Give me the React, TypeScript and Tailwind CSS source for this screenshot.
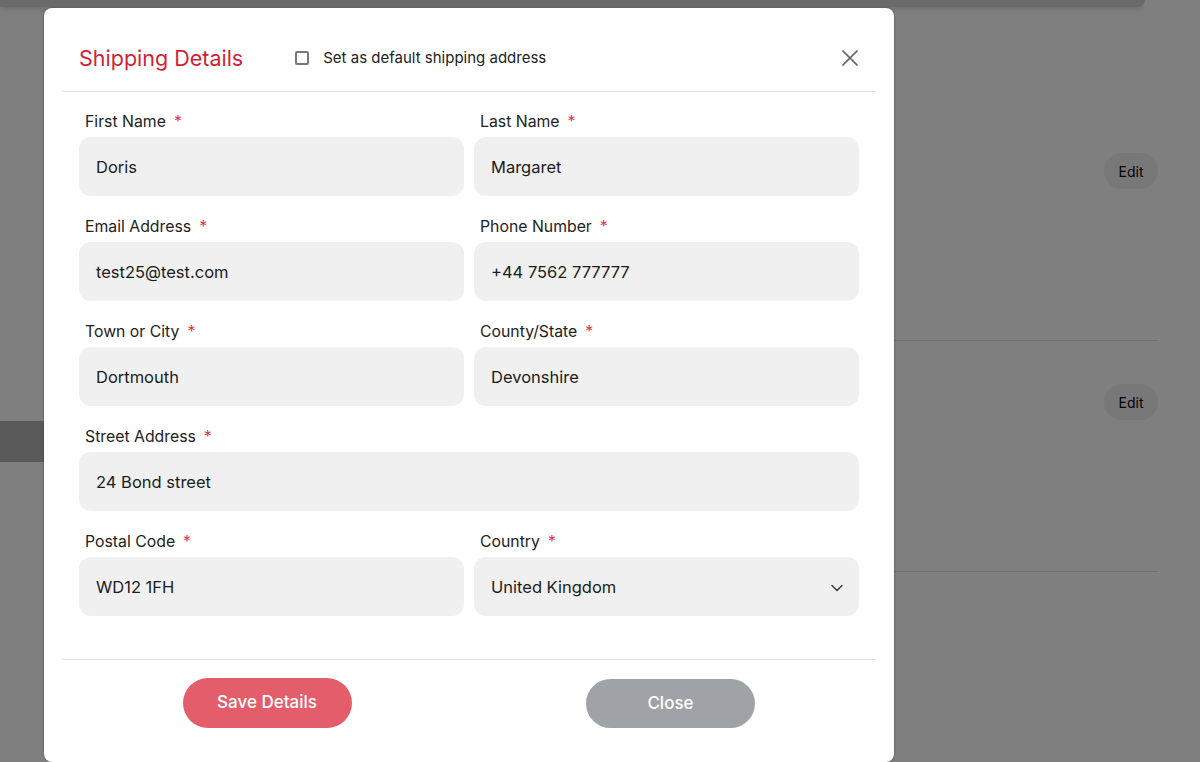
import React from "react";

interface Field {
  label: string;
  value: string;
  full?: boolean;
  select?: boolean;
}

const fields: Field[] = [
  { label: "First Name", value: "Doris" },
  { label: "Last Name", value: "Margaret" },
  { label: "Email Address", value: "test25@test.com" },
  { label: "Phone Number", value: "+44 7562 777777" },
  { label: "Town or City", value: "Dortmouth" },
  { label: "County/State", value: "Devonshire" },
  { label: "Street Address", value: "24 Bond street", full: true },
  { label: "Postal Code", value: "WD12 1FH" },
  { label: "Country", value: "United Kingdom", select: true },
];

function FormField({ field }: { field: Field }) {
  return (
    <div className={field.full ? "col-span-2" : ""}>
      <div className="pl-[6px] h-5 text-[15.8px] leading-5 text-[#222]">
        {field.label}
        <span className="ml-[8px] text-[#e8334a]">*</span>
      </div>
      <div className="mt-[5px] h-[59px] rounded-[12px] bg-[#f0f0f0] pl-[17px] pr-[16px] pt-[2px] flex items-center justify-between text-[16.5px] text-[#1c1c1c]">
        <span>{field.value}</span>
        {field.select && (
          <svg width="12" height="8" viewBox="0 0 12 8" fill="none">
            <path d="M1 1.5l5 5 5-5" stroke="#333" strokeWidth="1.4" strokeLinecap="round" strokeLinejoin="round" />
          </svg>
        )}
      </div>
    </div>
  );
}

export default function App() {
  return (
    <div className="relative w-[1200px] h-[762px] overflow-hidden bg-white font-['Inter',sans-serif]">
      {/* page behind the modal */}
      <div className="w-[1145px] h-[7px] bg-[#d4d4d4] rounded-br-lg shadow-md" />
      <div className="flex">
        <div className="w-[300px] pt-[414px]">
          <div className="h-[41px] bg-[#b4b4b4]" />
        </div>
        <div className="flex-1 pr-[42px] pt-[103px]">
          {[0, 1].map((i) => (
            <div key={i} className="h-[231px] pt-[43px] flex justify-end border-b border-[#dedede]">
              <button className="h-[36px] w-[54px] rounded-full bg-[#f0f0f0] text-[14px] text-black">Edit</button>
            </div>
          ))}
        </div>
      </div>

      <div className="absolute inset-0 bg-black/50" />

      {/* modal */}
      <div className="absolute left-[44px] top-[8px] w-[850px] h-[754px] bg-white rounded-lg shadow-[0_0_2px_rgba(0,0,0,0.5)] px-[18px]">
        <div className="h-[84px] pt-[17px] flex items-center border-b border-[#e3e3e3] pl-[17px] pr-[18px]">
          <h2 className="text-[21.5px] text-[#d11f35]">Shipping Details</h2>
          <label className="ml-[52px] flex items-center text-[15px] text-[#222]">
            <span className="w-[14px] h-[14px] border-2 border-[#767680] rounded-[2px]" />
            <span className="ml-[14px]">Set as default shipping address</span>
          </label>
          <button className="ml-auto">
            <svg width="16" height="16" viewBox="0 0 16 16" fill="none">
              <path d="M0.5 0.5l15 15M15.5 0.5l-15 15" stroke="#666" strokeWidth="1.6" />
            </svg>
          </button>
        </div>

        <div className="pt-[20px] pb-[43px] pl-[17px] pr-[17px] grid grid-cols-2 gap-x-[10px] gap-y-[21px] border-b border-[#e3e3e3]">
          {fields.map((f) => (
            <FormField key={f.label} field={f} />
          ))}
        </div>

        <div className="grid grid-cols-2 pt-[18px]">
          <div className="flex justify-center pl-[3px]">
            <button className="w-[169px] h-[50px] rounded-full bg-[#e35d6a] text-white text-[17px] font-medium">
              Save Details
            </button>
          </div>
          <div className="flex justify-center pr-[4px]">
            <button className="mt-[1px] w-[169px] h-[49px] rounded-full bg-[#9fa2a6] text-white text-[17px] font-medium">
              Close
            </button>
          </div>
        </div>
      </div>
    </div>
  );
}
